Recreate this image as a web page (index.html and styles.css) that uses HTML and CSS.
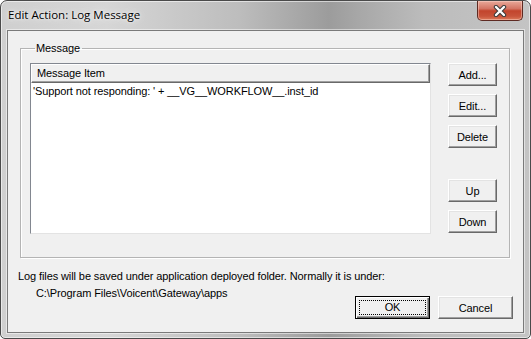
FILE: index.html
```html
<!DOCTYPE html>
<html>
<head>
  <title>Edit Action: Log Message</title>
  <link rel="stylesheet" href="styles.css">
</head>
<body>
  <div class="window">
    <div class="titlebar">
      <span class="title">Edit Action: Log Message</span>
      <button class="close" type="button" aria-label="Close">
        <svg width="16" height="12" viewBox="0 0 16 12">
          <path d="M4 2 L12 10 M12 2 L4 10" stroke="#3a3a3a" stroke-width="4.4" stroke-linecap="round"/>
          <path d="M4 2 L12 10 M12 2 L4 10" stroke="#ffffff" stroke-width="2.4" stroke-linecap="round"/>
        </svg>
      </button>
    </div>

    <div class="client">
      <fieldset class="group">
        <legend>Message</legend>
        <div class="group-body">
          <div class="list">
            <div class="list-header">Message Item</div>
            <div class="list-row">'Support not responding: ' + __VG__WORKFLOW__.inst_id</div>
          </div>
          <div class="side-buttons">
            <button class="btn">Add...</button>
            <button class="btn">Edit...</button>
            <button class="btn">Delete</button>
            <button class="btn gap">Up</button>
            <button class="btn">Down</button>
          </div>
        </div>
      </fieldset>

      <p class="note">Log files will be saved under application deployed folder. Normally it is under:</p>
      <div class="footer">
        <span class="path">C:\Program Files\Voicent\Gateway\apps</span>
        <div class="dialog-buttons">
          <button class="btn wide default"><span class="focus">OK</span></button>
          <button class="btn wide">Cancel</button>
        </div>
      </div>
    </div>
  </div>
</body>
</html>
```

FILE: styles.css
```css
* {
  margin: 0;
  padding: 0;
  box-sizing: border-box;
}

body {
  font-family: 'Liberation Sans', Arial, sans-serif;
  font-size: 11px;
  letter-spacing: -0.1px;
  color: #000;
  background: #fff;
}

.window {
  width: 531px;
  height: 339px;
  border: 1px solid #4a4a4a;
  border-radius: 7px 7px 5px 5px;
  background: linear-gradient(90deg, #cfcfcf 0%, #d6d6d6 20%, #bdbdbd 45%, #9c9c9c 62%, #a8a8a8 68%, #bcbcbc 80%, #c4c4c4 100%);
  box-shadow: inset 0 0 0 1px rgba(255, 255, 255, 0.55);
  padding: 0 6px 5px 6px;
  display: flex;
  flex-direction: column;
}

.titlebar {
  height: 29px;
  display: flex;
  align-items: flex-start;
}

.title {
  font-family: 'Open Sans', 'Noto Sans', sans-serif;
  font-size: 11.5px;
  letter-spacing: 0;
  color: #000;
  margin: 6px 0 0 1px;
  text-shadow: 0 0 8px rgba(255, 255, 255, 0.9), 0 0 3px rgba(255, 255, 255, 0.9);
}

.close {
  margin-left: auto;
  margin-right: 1px;
  width: 46px;
  height: 20px;
  border: 1px solid #5e2a22;
  border-top: none;
  border-radius: 0 0 5px 5px;
  background: linear-gradient(180deg, #e9a99a 0%, #d47564 40%, #c2442c 52%, #c8533a 80%, #dc7a5a 100%);
  box-shadow: inset 0 0 0 1px rgba(255, 220, 210, 0.45);
  display: flex;
  align-items: center;
  justify-content: center;
}

.client {
  flex: 1;
  border: 1px solid #7a7a7a;
  background: #f0f0f0;
  box-shadow: 0 0 0 1px rgba(255, 255, 255, 0.5);
  display: flex;
  flex-direction: column;
  padding: 11px 13px 0 12px;
}

.group {
  border: 1px solid #b4b4b4;
  box-shadow: inset 1px 1px #fff, 1px 1px #fff;
  height: 216px;
  padding: 0 11px 0 9px;
}

.group legend {
  margin-left: 5px;
  padding: 0 2px 0 1px;
  line-height: 13px;
}

.group-body {
  display: flex;
  gap: 17px;
  padding-top: 8px;
}

.list {
  width: 401px;
  height: 171px;
  background: #fff;
  border: 1px solid #828790;
  border-right-color: #e3e3e3;
  border-bottom-color: #e3e3e3;
}

.list-header {
  height: 19px;
  line-height: 17px;
  padding-left: 5px;
  background: #f0f0f0;
  border: 1px solid #fff;
  border-right-color: #696969;
  border-bottom-color: #696969;
  box-shadow: inset -1px -1px #a0a0a0;
}

.list-row {
  line-height: 17px;
  padding-left: 2px;
}

.side-buttons {
  display: flex;
  flex-direction: column;
  gap: 8px;
}

.btn {
  font-family: 'Liberation Sans', Arial, sans-serif;
  font-size: 11px;
  letter-spacing: -0.1px;
  width: 49px;
  height: 23px;
  background: #f0f0f0;
  color: #000;
  border: 1px solid;
  border-color: #fff #696969 #696969 #fff;
  box-shadow: inset -1px -1px #a0a0a0, inset 1px 1px #e3e3e3;
}

.btn.gap {
  margin-top: 23px;
}

.note {
  margin: 12px 0 0 -2px;
  line-height: 13px;
}

.footer {
  display: flex;
  justify-content: space-between;
  align-items: flex-start;
  margin-right: -3px;
}

.path {
  margin: 4px 0 0 16px;
  line-height: 13px;
}

.dialog-buttons {
  display: flex;
  gap: 8px;
  margin-top: 13px;
}

.btn.wide {
  width: 75px;
}

.btn.default {
  border: 1px solid #000;
  box-shadow: inset 1px 1px #fff, inset -1px -1px #696969, inset -2px -2px #a0a0a0;
  padding: 3px;
}

.focus {
  display: block;
  height: 100%;
  border: 1px dotted #000;
  line-height: 13px;
}
```
